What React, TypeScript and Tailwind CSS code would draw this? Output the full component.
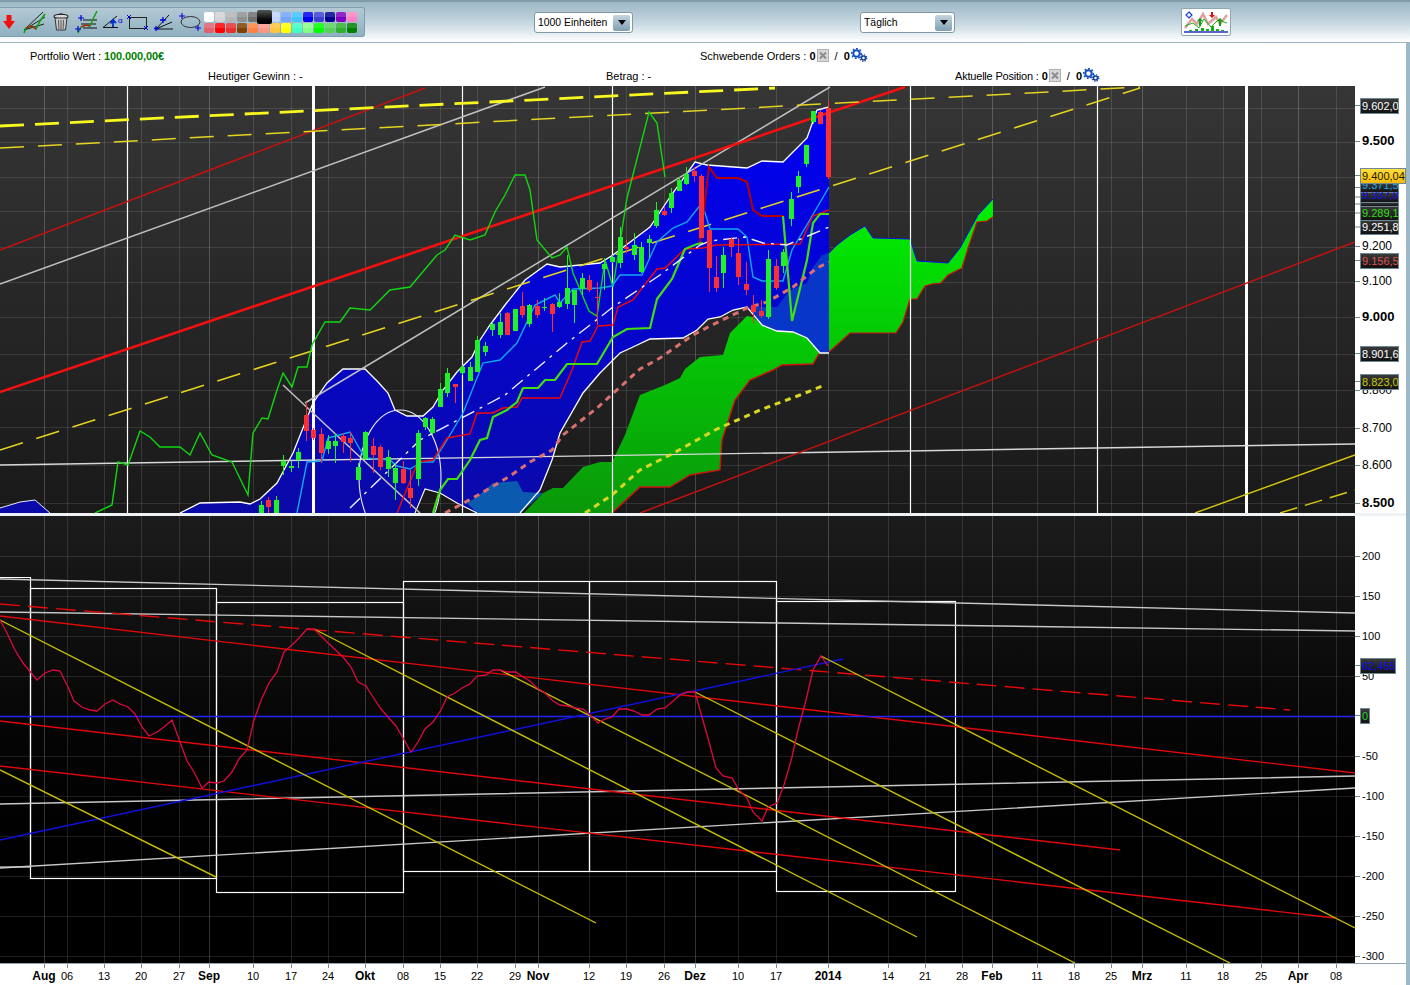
import React from 'react';

// page x of every time tick, shared by both panels and the date axis
const ticks: [number, string, boolean][] = [
    [44, 'Aug', true], [67, '06', false], [104, '13', false], [141, '20', false], [179, '27', false],
    [209, 'Sep', true], [253, '10', false], [291, '17', false], [328, '24', false], [365, 'Okt', true],
    [403, '08', false], [440, '15', false], [477, '22', false], [515, '29', false], [538, 'Nov', true],
    [589, '12', false], [626, '19', false], [664, '26', false], [695, 'Dez', true], [738, '10', false],
    [776, '17', false], [828, '2014', true], [888, '14', false], [925, '21', false], [962, '28', false],
    [992, 'Feb', true], [1037, '11', false], [1074, '18', false], [1111, '25', false], [1142, 'Mrz', true],
    [1186, '11', false], [1223, '18', false], [1261, '25', false], [1298, 'Apr', true], [1336, '08', false],
];

// x, body top, body bottom, wick top, wick bottom, colour
type Candle = [number, number, number, number, number, 'g' | 'r'];
const candles: Candle[] = [
    [261, 505, 513, 501, 513, 'g'], [268, 500, 507, 497, 513, 'r'], [276, 500, 513, 496, 513, 'g'],
    [283, 461, 466, 455, 475, 'g'], [291, 466, 468, 461, 472, 'g'], [298, 452, 460, 448, 468, 'g'],
    [306, 415, 431, 402, 441, 'r'], [313, 430, 438, 428, 440, 'r'], [321, 434, 453, 428, 463, 'r'],
    [328, 441, 449, 435, 454, 'g'], [335, 441, 446, 433, 463, 'g'], [343, 436, 442, 433, 453, 'r'],
    [350, 438, 443, 432, 462, 'r'], [358, 467, 480, 463, 480, 'g'], [365, 432, 459, 431, 460, 'g'],
    [373, 446, 455, 438, 473, 'r'], [380, 447, 467, 445, 470, 'r'], [388, 457, 469, 450, 477, 'g'],
    [395, 468, 483, 463, 500, 'g'], [403, 469, 483, 461, 484, 'r'], [410, 488, 498, 470, 508, 'r'],
    [418, 433, 479, 430, 486, 'g'], [425, 418, 427, 417, 430, 'g'], [432, 419, 433, 417, 435, 'g'],
    [440, 389, 407, 383, 407, 'g'], [447, 373, 393, 368, 397, 'g'], [455, 384, 387, 384, 403, 'r'],
    [462, 367, 373, 365, 375, 'g'], [470, 367, 381, 362, 381, 'g'], [477, 340, 372, 336, 372, 'g'],
    [485, 346, 352, 342, 356, 'g'], [492, 324, 330, 322, 336, 'g'], [500, 322, 335, 313, 338, 'g'],
    [507, 313, 335, 312, 335, 'r'], [515, 309, 331, 309, 331, 'g'], [522, 306, 315, 292, 318, 'r'],
    [529, 305, 324, 304, 327, 'g'], [537, 306, 315, 300, 318, 'r'], [544, 307, 308, 298, 311, 'g'],
    [552, 304, 314, 303, 332, 'r'], [559, 302, 307, 293, 308, 'g'], [567, 288, 304, 255, 309, 'g'],
    [574, 290, 305, 290, 323, 'g'], [582, 278, 289, 273, 295, 'g'], [589, 280, 290, 275, 292, 'r'],
    [597, 297, 298, 282, 325, 'r'], [604, 264, 269, 258, 290, 'g'], [612, 257, 262, 255, 263, 'g'],
    [620, 237, 263, 227, 268, 'g'], [626, 247, 249, 240, 253, 'r'], [634, 245, 255, 233, 260, 'g'],
    [641, 247, 272, 242, 273, 'g'], [649, 239, 243, 235, 258, 'g'], [656, 210, 226, 202, 228, 'g'],
    [664, 211, 215, 207, 216, 'r'], [671, 193, 208, 188, 213, 'g'], [679, 180, 191, 177, 191, 'g'],
    [686, 174, 184, 167, 185, 'g'], [694, 171, 176, 167, 182, 'r'], [701, 176, 238, 174, 238, 'r'],
    [709, 230, 268, 230, 292, 'r'], [716, 277, 288, 256, 292, 'r'], [723, 255, 273, 247, 288, 'g'],
    [731, 239, 247, 237, 257, 'r'], [738, 253, 277, 238, 285, 'r'], [746, 284, 290, 262, 295, 'r'],
    [753, 305, 312, 295, 323, 'r'], [761, 311, 316, 300, 318, 'r'], [768, 259, 317, 250, 319, 'g'],
    [776, 266, 288, 259, 290, 'r'], [783, 252, 266, 249, 273, 'g'], [791, 199, 219, 192, 226, 'g'],
    [798, 176, 187, 171, 193, 'g'], [806, 145, 164, 145, 167, 'g'], [813, 111, 122, 111, 124, 'g'],
    [820, 112, 124, 110, 124, 'r'], [828, 108, 177, 100, 179, 'r'],
];

const cloudTop = '250,504 260,499 277,483 293,453 313,403 327,383 343,369 365,369 378,382 388,393 395,410 407,416 423,416 433,407 443,390 457,372 472,357 480,340 490,325 505,305 525,280 547,264 560,267 600,263 613,255 650,227 670,197 695,162 707,165 747,168 762,161 783,162 807,138 817,110 829,107';
const cloudBottom = '829,353 820,353 807,338 793,332 777,331 762,325 747,307 733,310 720,317 708,319 697,330 683,338 650,339 633,347 620,353 600,373 583,393 560,433 552,460 540,490 520,513';
const hump = '477,513 457,503 440,493 425,489 415,513';

const oscillator = '0,620 7,633 15,650 23,663 37,680 45,673 53,670 60,671 68,687 74,701 82,707 90,710 97,711 105,704 113,700 120,704 128,707 135,714 142,727 149,736 157,732 164,727 172,720 180,742 187,761 194,772 202,788 209,782 217,783 224,781 232,772 239,759 247,750 254,720 262,698 269,683 277,672 284,652 292,645 299,638 307,629 314,629 328,643 343,657 351,667 358,682 366,686 373,697 381,709 388,717 396,726 403,738 411,752 418,742 425,729 433,722 441,710 447,697 455,693 462,688 470,684 477,676 486,675 493,670 500,670 507,672 516,672 523,677 530,681 537,688 545,693 553,701 560,705 568,706 575,708 583,709 590,715 598,723 605,719 612,717 619,709 627,709 634,711 642,715 649,715 657,709 665,708 672,702 680,695 687,692 695,692 702,717 709,742 716,768 723,776 732,778 739,790 747,798 753,812 762,821 768,807 777,803 784,785 792,757 798,730 806,700 813,670 821,656 828,666';

const swatches = [
    ['#ffffff', '#d4d4d4', '#b4b4b4', '#909090', '#707070', '#000000', '#c4d2ff', '#70a4ff', '#40c4ff', '#0000f0', '#4040d4', '#000090', '#8000c0', '#ff80c4'],
    ['#e06070', '#ff0000', '#e83030', '#804000', '#ff8040', '#ff9484', '#ffc440', '#ffff00', '#40ffc4', '#84ff84', '#00ff00', '#54d454', '#30b030', '#008000'],
];

const Select = ({ label, width }: { label: string; width: string }) => (
    <div className={`${width} h-[21px] mt-[1px] flex items-center justify-between bg-white border border-[#7d98a6] rounded-[3px] pl-[3px] pr-[2px] text-[10.4px] text-black`}>
        <span>{label}</span>
        <span className="w-[17px] h-[16px] rounded-[2px] bg-linear-to-b from-[#c4d6df] to-[#7f9fb0] flex items-center justify-center">
            <span className="w-0 h-0 border-x-[4px] border-x-transparent border-t-[5px] border-t-black" />
        </span>
    </div>
);

const Gears = () => (
    <svg width="17" height="14" viewBox="0 0 17 14" className="inline-block align-[-2px] ml-[1px]">
        <circle cx="5.5" cy="5.5" r="3.2" fill="none" stroke="#1450c0" strokeWidth="2" />
        <circle cx="5.5" cy="5.5" r="4.8" fill="none" stroke="#1450c0" strokeWidth="1.6" strokeDasharray="1.8 1.8" />
        <circle cx="12.5" cy="10" r="2" fill="none" stroke="#0f3f9c" strokeWidth="1.5" />
        <circle cx="12.5" cy="10" r="3.3" fill="none" stroke="#0f3f9c" strokeWidth="1.2" strokeDasharray="1.3 1.3" />
    </svg>
);

const CloseBox = () => (
    <svg width="12" height="13" viewBox="0 0 12 13" className="inline-block align-[-2px] ml-[1px]">
        <rect x="0.5" y="0.5" width="11" height="12" fill="#d8d8d8" stroke="#b0b0b0" />
        <path d="M3 3.5l6 6M9 3.5l-6 6" stroke="#8c8c8c" strokeWidth="2" />
    </svg>
);

const Orders = () => (
    <>
        <b>0</b><CloseBox /><span className="ml-[6px]">/</span><b className="ml-[6px]">0</b><Gears />
    </>
);

const ToolIcons = () => (
    <div className="flex items-center h-full">
        {/* down arrow */}
        <svg width="12" height="14" viewBox="0 0 12 14" className="ml-[3px]">
            <path d="M3.5 0h5v6H12L6 14 0 6h3.5z" fill="#f01010" />
        </svg>
        {/* trend fan */}
        <svg width="23" height="23" viewBox="0 0 23 23" className="ml-[8px]">
            <path d="M1 19L20 1M1 19L21 13M1 19L22 6" stroke="#111" strokeWidth="0.9" fill="none" />
            <path d="M1 22L3 17 9 15 13 18 17 10 22 3" stroke="#10a010" strokeWidth="1.6" fill="none" />
            <path d="M3 17L8 15 13 18" stroke="#d01010" strokeWidth="1.3" fill="none" />
        </svg>
        {/* trash */}
        <svg width="16" height="18" viewBox="0 0 16 18" className="ml-[7px]">
            <ellipse cx="8" cy="3.5" rx="7" ry="2.2" fill="#d9d9d9" stroke="#222" strokeWidth="1.1" />
            <path d="M5.5 1.5Q8 0 10.5 1.5" stroke="#222" fill="none" />
            <path d="M2 5l1.5 12h9L14 5z" fill="#c8c8c8" stroke="#333" strokeWidth="1" />
            <path d="M5.5 7l.4 9M8 7v9M10.5 7l-.4 9" stroke="#555" strokeWidth="1" />
        </svg>
        {/* channel with crosses */}
        <svg width="23" height="23" viewBox="0 0 23 23" className="ml-[6px]">
            <path d="M8 9h14M6 13h15M8 17h14" stroke="#111" strokeWidth="1" />
            <path d="M3 22L6 16 11 14 15 15 19 6 22 0" stroke="#10a010" strokeWidth="1.5" fill="none" />
            <path d="M6 16L11 14 15 15" stroke="#d01010" strokeWidth="1.2" fill="none" />
            <path d="M4 4v6M1 7h6M1 15v6M-2 18h6" stroke="#0000e0" strokeWidth="1.2" transform="translate(2 0)" />
        </svg>
        {/* angle */}
        <svg width="22" height="12" viewBox="0 0 22 12" className="ml-[4px]">
            <path d="M15 0L1 11.5h15" stroke="#111" strokeWidth="1" fill="none" />
            <path d="M11 11V5M8.5 7.5L11 4l3 3" stroke="#0030d0" strokeWidth="1.8" fill="none" />
            <text x="16" y="7" fontSize="8" fill="#0000d0" fontFamily="'Liberation Sans', sans-serif">α</text>
        </svg>
        {/* rectangle */}
        <svg width="22" height="17" viewBox="0 0 22 17" className="ml-[3px]">
            <rect x="2.5" y="3.5" width="17" height="11" fill="none" stroke="#222" strokeWidth="1" />
            <path d="M0 1l4 4M4 1L0 5M17 12l4 4M21 12l-4 4" stroke="#0000e0" strokeWidth="1" />
        </svg>
        {/* fibonacci fan */}
        <svg width="20" height="17" viewBox="0 0 20 17" className="ml-[5px]">
            <path d="M2 15L15 1M2 15L18 8M2 15h17" stroke="#111" strokeWidth="1" fill="none" />
            <path d="M9 3v6M6 6h6M2 12v5M-1 14.5h6" stroke="#0000e0" strokeWidth="1.3" />
        </svg>
        {/* ellipse */}
        <svg width="23" height="18" viewBox="0 0 23 18" className="ml-[5px]">
            <ellipse cx="11.5" cy="9" rx="9.5" ry="5.5" fill="none" stroke="#333" strokeWidth="1" />
            <path d="M3 0v6M0 3h6M19 12v6M16 15h6" stroke="#0000e0" strokeWidth="1.1" />
        </svg>
    </div>
);

const Palette = () => (
    <div className="relative flex flex-col gap-[1px] w-[154px]">
        {swatches.map((row, r) => (
            <div key={r} className="flex gap-[1px]">
                {row.map((c, i) => (
                    <span key={i} className="relative w-[10px] h-[10px] rounded-[2px] overflow-hidden" style={{ backgroundColor: c }}>
                        <span className="absolute inset-x-0 top-0 h-1/2 bg-white/15" />
                    </span>
                ))}
            </div>
        ))}
        <span className="absolute left-[53px] top-[-2px] w-[15px] h-[14px] rounded-[2px] bg-linear-to-b from-[#555] to-black" />
    </div>
);

const ChartButton = () => (
    <div className="w-[50px] h-[28px] rounded-[2px] border border-[#8fa5b1] bg-white p-[2px]">
        <svg width="44" height="22" viewBox="0 0 44 22">
            <path d="M1 17L8 8 13 13 19 3 24 13 32 6 36 13 43 4" stroke="#e0a0a0" strokeWidth="2.5" fill="none" />
            <path d="M1 15L9 12 15 17 20 8 27 16 34 9 43 12" stroke="#20b020" strokeWidth="1" fill="none" />
            <path d="M5 1l3 3-3 3-3-3z" fill="#fff" stroke="#1040d0" strokeWidth="1.2" />
            <path d="M15 15v-5h-2l3-3 3 3h-2v5zM35 15v-5h-2l3-3 3 3h-2v5z" fill="#10a010" />
            <path d="M27 1v3h-2l3 3 3-3h-2V1z" fill="#e01010" />
            <path d="M5 19h3v1H5zM11 18h3v2h-3zM17 17h3v3h-3zM22 18h3v2h-3zM27 15h3v5h-3zM32 18h3v2h-3zM37 19h3v1h-3z" fill="#10b010" />
            <path d="M0 21h44" stroke="#2030c0" strokeWidth="1.5" />
        </svg>
    </div>
);

const Badge = ({ y, h = 15, w = 38, x = 1360, text, color, yellow }: { y: number; h?: number; w?: number; x?: number; text: string; color: string; yellow?: boolean }) => (
    <g>
        <path d={`M1355 ${y + h / 2}h5`} stroke="#6f8896" />
        <rect x={x + 0.5} y={y + 0.5} width={w} height={h} fill={yellow ? 'url(#badgeYellow)' : 'url(#badgeDark)'} stroke="#6f8896" />
        <svg x={x + 1} y={y} width={w - 1} height={h}>
            <text x="1" y={h - 3} fontSize="11" fill={color}>{text}</text>
        </svg>
    </g>
);

const AxisDefs = () => (
    <defs>
        <linearGradient id="badgeDark" x1="0" y1="0" x2="0" y2="1">
            <stop offset="0" stopColor="#3a3a3a" />
            <stop offset="1" stopColor="#101010" />
        </linearGradient>
        <linearGradient id="badgeYellow" x1="0" y1="0" x2="0" y2="1">
            <stop offset="0" stopColor="#ffe040" />
            <stop offset="1" stopColor="#f8b800" />
        </linearGradient>
    </defs>
);

const priceLabels: [number, string, boolean][] = [
    [141, '9.500', true], [246, '9.200', false], [281, '9.100', false], [317, '9.000', true],
    [390, '8.800', false], [428, '8.700', false], [465, '8.600', false], [503, '8.500', true],
];

const PriceAxis = () => (
    <svg width="51" height="427" viewBox="1355 86 51 427" fontFamily="'Liberation Sans', sans-serif">
        <AxisDefs />
        {priceLabels.map(([y, t, bold]) => (
            <g key={t}>
                <path d={`M1355 ${y + 0.5}h5`} stroke="#6f8896" />
                <text x="1362" y={y + 4} fontSize={bold ? 13 : 12} fontWeight={bold ? 700 : 400} fill="#000">{t}</text>
            </g>
        ))}
        <Badge y={98} text="9.602,0" color="#ffffff" />
        <Badge y={374} text="8.823,0" color="#c8c800" />
        <Badge y={346} text="8.901,6" color="#ffffff" />
        <Badge y={253} text="9.156,5" color="#e05050" />
        <Badge y={183} text="9.371,5" color="#20a8f0" h={9} />
        <Badge y={192} text="9.337,0" color="#1010f0" h={10} />
        <Badge y={202} text="" color="#fff" h={4} />
        <Badge y={206} text="9.289,1" color="#30e010" h={14} />
        <Badge y={220} text="9.251,8" color="#ffffff" h={14} />
        <Badge y={168} w={45} text="9.400,04" color="#202000" yellow />
    </svg>
);

const OscAxis = () => (
    <svg width="51" height="447" viewBox="1355 516 51 447" fontFamily="'Liberation Sans', sans-serif">
        <AxisDefs />
        {[200, 150, 100, 50, -50, -100, -150, -200, -250, -300].map((v) => {
            const y = 716 - v * 0.8;
            return (
                <g key={v}>
                    <path d={`M1355 ${y + 0.5}h5`} stroke="#6f8896" />
                    <text x="1362" y={y + 4} fontSize="11" fill="#000">{v}</text>
                </g>
            );
        })}
        <Badge y={658} w={35} text="62,455" color="#1010f0" />
        <Badge y={708} w={9} text="0" color="#30d030" />
    </svg>
);

const Grid = ({ ys, top, bottom }: { ys: number[]; top: number; bottom: number }) => (
    <g>
        {ys.map((y) => <path key={y} d={`M0 ${y + 0.5}H1355`} stroke="#ffffff" strokeOpacity="0.11" />)}
        {ticks.map(([x, , month]) => (
            <path key={x} d={`M${x + 0.5} ${top}V${bottom}`} stroke="#ffffff" strokeOpacity={month ? 0.2 : 0.12} />
        ))}
    </g>
);

const PriceChart = () => (
    <svg width="1355" height="427" viewBox="0 86 1355 427" className="block">
        <defs>
            <linearGradient id="blueFill" gradientUnits="userSpaceOnUse" x1="0" y1="106" x2="0" y2="513">
                <stop offset="0" stopColor="#0000f4" />
                <stop offset="1" stopColor="#0a0aa8" />
            </linearGradient>
            <linearGradient id="greenFill" gradientUnits="userSpaceOnUse" x1="0" y1="200" x2="0" y2="513">
                <stop offset="0" stopColor="#00f000" />
                <stop offset="1" stopColor="#0a980a" />
            </linearGradient>
        </defs>
        <Grid ys={[108, 142, 177, 211, 247, 282, 317, 354, 390, 427, 465, 503]} top={86} bottom={513} />

        {/* older cloud on the left */}
        <polygon points="0,513 0,508 20,502 35,500 50,513" fill="url(#blueFill)" />
        <polyline points="0,508 20,502 35,500 50,513" fill="none" stroke="#e8e8ff" strokeWidth="1" />

        {/* band between the two white lines */}
        <polygon points={`180,513 200,503 240,502 ${cloudTop} ${cloudBottom} ${hump}`} fill="url(#blueFill)" />

        {/* kumo, green outside the band and teal inside */}
        <polygon points="524,513 543,493 553,488 563,488 583,467 600,462 612,462 625,435 640,395 665,385 680,378 685,369 700,357 723,355 730,333 747,316 753,317 762,325 777,331 793,332 807,338 820,352 813,364 782,365 773,370 750,380 735,400 722,440 720,470 690,475 670,487 640,487 612,513" fill="url(#greenFill)" />
        <polyline points="612,513 640,487 670,487 690,475 720,470 722,440 735,400 750,380 773,370 782,365 813,364 820,352" fill="none" stroke="#d01010" strokeWidth="1.4" />
        <polygon points="467,503 477,497 493,483 517,481 523,492 543,493 520,513 477,513" fill="#0a5ab0" />
        <polygon points="829,253 822,255 813,267 807,283 790,290 777,307 750,307 762,325 777,331 793,332 807,338 820,353 829,353" fill="#0836c8" />
        <polygon points="829,253 837,245 850,235 865,226 873,238 910,239 917,261 948,263 960,248 978,215 993,199 993,217 987,221 977,222 968,248 962,268 948,275 941,283 932,284 925,286 917,299 910,299 903,322 896,333 850,333 829,352" fill="url(#greenFill)" />
        <polyline points="829,253 837,245 850,235 865,226 873,238 910,239 917,261 948,263 960,248 978,215 993,199" fill="none" stroke="#1010e0" strokeWidth="1" />
        <polyline points="829,352 850,333 896,333 903,322 910,299 917,299 925,286 932,284 941,283 948,275 962,268 968,248 977,222 987,221 993,217" fill="none" stroke="#d01010" strokeWidth="1.2" />

        <polyline points={`180,513 200,503 240,502 ${cloudTop}`} fill="none" stroke="#ffffff" strokeWidth="1.3" />
        <polyline points={cloudBottom} fill="none" stroke="#ffffff" strokeWidth="1.3" />
        <polyline points={hump} fill="none" stroke="#ffffff" strokeWidth="1.1" />

        {/* session separators */}
        <path d="M127.5 86V513M462.5 86V513M612.5 86V513M910.5 86V513M1097.5 86V513" stroke="#ffffff" strokeWidth="1.2" />
        <path d="M313.5 86V513M1246.5 86V513" stroke="#ffffff" strokeWidth="3" />

        {/* trend lines */}
        <path d="M0 465L1355 444" stroke="#d8d8d8" strokeWidth="1.4" />
        <path d="M0 284L545 87M305 403L830 87M283 385L420 513" stroke="#c0c0c0" strokeWidth="1.5" fill="none" />
        <ellipse cx="400" cy="477" rx="41" ry="67" fill="none" stroke="#e8e8f8" strokeWidth="1.1" />
        <path d="M0 250L425 88M640 513L1355 242" stroke="#c81010" strokeWidth="1.5" />
        <path d="M0 392L905 87" stroke="#f41010" strokeWidth="2.6" />
        <path d="M0 126L775 88" stroke="#f8f820" strokeWidth="2.8" strokeDasharray="24 11" />
        <path d="M0 148L1140 87M0 450L1140 88" stroke="#e4d420" strokeWidth="1.5" strokeDasharray="24 14" />
        <path d="M1195 513L1355 455" stroke="#d8c810" strokeWidth="1.4" />
        <path d="M1280 513L1355 490" stroke="#d8c810" strokeWidth="1.4" strokeDasharray="18 8" />

        {/* indicators */}
        <polyline points="95,513 112,505 118,462 128,465 140,431 150,437 160,447 180,447 190,455 200,433 212,455 232,462 248,495 253,433 262,418 268,419 277,390 283,373 292,387 298,367 307,367 312,345 325,322 340,322 350,308 370,310 390,290 410,287 437,255 445,250 455,235 470,240 485,235 495,212 505,195 515,175 525,175 530,190 537,240 552,258 560,255 567,247 573,273 589,311 597,316 605,260 613,287 627,198 649,112 657,123 665,177" fill="none" stroke="#10d810" strokeWidth="1.4" />
        <polyline points="297,513 307,462 322,461 328,438 350,432 365,458 390,460 397,466 410,469 422,462 433,462 447,440 463,413 483,363 500,360 517,343 535,305 555,295 560,303 573,289 600,288 612,286 620,275 642,275 657,242 673,228 687,222 702,203 710,229 738,229 747,237 753,277 762,281 783,281 792,250 808,223 829,187" fill="none" stroke="#10a8f0" strokeWidth="1.4" />
        <polyline points="397,513 418,462 433,460 447,438 470,434 477,413 493,413 503,408 517,407 522,398 560,398 572,370 582,342 590,341 598,326 613,325 618,307 633,300 657,269 665,268 685,249 703,248 717,245 800,244 813,216 829,210" fill="none" stroke="#f00808" strokeWidth="1.4" />
        <polyline points="700,243 709,167 717,178 738,178 747,182 753,210 762,216 783,216" fill="none" stroke="#b80000" strokeWidth="2" />
        <polyline points="433,513 440,490 448,479 457,479 470,460 480,440 487,438 493,417 507,410 517,402 523,388 538,388 545,380 555,380 567,364 597,364 613,337 627,329 650,328 657,299 672,279 685,249 697,244 703,243" fill="none" stroke="#40e010" strokeWidth="2.2" />
        <polyline points="783,216 792,321 807,260 813,223 820,214 829,214" fill="none" stroke="#40e010" strokeWidth="2.2" />
        <polyline points="350,508 420,440 505,395 567,343 613,307 660,275 700,245 710,241 745,237 763,243 787,245 803,238 829,227" fill="none" stroke="#f0f0ff" strokeWidth="1.4" strokeDasharray="14 6 3 6" />
        <polyline points="445,513 460,505 480,494 510,476 530,462 552,450 563,435 597,408 640,369 660,358 693,335 710,326 747,308 767,302 793,287 817,268 829,262" fill="none" stroke="#d87070" strokeWidth="3" strokeDasharray="6 5" />
        <polyline points="585,513 612,495 640,470 670,455 715,430 760,410 800,395 825,385" fill="none" stroke="#d8d820" strokeWidth="3" strokeDasharray="6 5" />

        {/* candles */}
        {candles.map(([x, top, bot, hi, lo, c]) => (
            <g key={x} fill={c === 'g' ? '#20f028' : '#fa3034'}>
                <rect x={x} y={hi} width="1" height={lo - hi} />
                <rect x={x - 2} y={top} width="5" height={Math.max(bot - top, 1)} />
            </g>
        ))}
    </svg>
);

const OscChart = () => (
    <svg width="1355" height="447" viewBox="0 516 1355 447" className="block">
        <Grid ys={[556, 596, 636, 676, 756, 796, 836, 876, 916, 956]} top={516} bottom={963} />
        {/* week boxes */}
        <g fill="none" stroke="#ffffff" strokeWidth="1.2">
            <path d="M-2 577.5H30.5V867H-2" />
            <rect x="30.5" y="588.5" width="186" height="290" />
            <rect x="216.5" y="602.5" width="187" height="290" />
            <rect x="403.5" y="581.5" width="186" height="290" />
            <rect x="589.5" y="581.5" width="187" height="290" />
            <rect x="776.5" y="601.5" width="179" height="290" />
        </g>
        <path d="M0 579L1355 613M0 612L1355 631M0 804L1355 776M0 868L1355 788" stroke="#c8c8c8" strokeWidth="1.4" fill="none" />
        <path d="M0 604L1290 710" stroke="#e80808" strokeWidth="1.4" strokeDasharray="20 8" />
        <path d="M0 616L1355 773M0 721L1120 850M0 766L1335 918" stroke="#e00808" strokeWidth="1.4" fill="none" />
        <path d="M0 716.5H1355" stroke="#2424f0" strokeWidth="1.3" />
        <path d="M0 840L843 659" stroke="#1010e0" strokeWidth="1.4" />
        <path d="M0 770L216 877M0 620L596 923M314 629L917 937M500 670L1075 963M695 692L1230 963M821 656L1355 928" stroke="#c4bc00" strokeWidth="1.4" fill="none" />
        <polyline points={oscillator} fill="none" stroke="#e00840" strokeWidth="1.3" />
    </svg>
);

const DateAxis = () => (
    <svg width="1406" height="20" viewBox="0 963 1406 20" className="block" fontFamily="'Liberation Sans', sans-serif">
        <path d="M0 963.5H1406" stroke="#8fa5b1" />
        {ticks.map(([x, t, bold]) => (
            <g key={x}>
                <path d={`M${x + 0.5} 964v4`} stroke="#7f8f98" />
                <text x={x} y="980" textAnchor="middle" fontSize={bold ? 12 : 11} fontWeight={bold ? 700 : 400} fill="#000">{t}</text>
            </g>
        ))}
    </svg>
);

export default function App() {
    return (
        <div className="w-[1410px] h-[985px] overflow-hidden bg-white flex flex-col font-['Liberation_Sans',sans-serif] text-[11px] text-black">
            {/* toolbar */}
            <div className="h-[43px] shrink-0 flex items-center bg-linear-to-b from-[#9db8c6] via-[#c4d6df] to-white border-t-2 border-t-[#7f9aa8] border-b border-b-[#9db3bf]">
                <div className="w-[365px] h-[30px] flex items-center bg-linear-to-b from-[#b4c9d4] to-[#8fb0c0] border border-l-0 border-[#7f9db0] rounded-r-[3px]">
                    <div className="w-[204px] h-full"><ToolIcons /></div>
                    <Palette />
                </div>
                <div className="ml-[169px]"><Select label="1000 Einheiten" width="w-[99px]" /></div>
                <div className="ml-[227px]"><Select label="Täglich" width="w-[95px]" /></div>
                <div className="ml-[226px]"><ChartButton /></div>
            </div>

            <div className="flex-1 flex min-h-0">
                <div className="w-[1406px] flex flex-col">
                    {/* account summary */}
                    <div className="h-[43px] shrink-0 flex flex-col pt-[3px]">
                        <div className="h-[21px] flex items-center">
                            <div className="w-[700px] pl-[30px] tracking-[-0.1px]">Portfolio Wert : <b className="text-[#008000]">100.000,00€</b></div>
                            <div>Schwebende Orders : <Orders /></div>
                        </div>
                        <div className="h-[19px] flex items-center">
                            <div className="w-[606px] pl-[208px]">Heutiger Gewinn : -</div>
                            <div className="w-[349px]">Betrag : -</div>
                            <div><span className="tracking-[-0.2px]">Aktuelle Position :</span> <Orders /></div>
                        </div>
                    </div>

                    <div className="flex h-[427px] shrink-0">
                        <div className="bg-linear-to-b from-[#363636] to-[#191919]"><PriceChart /></div>
                        <PriceAxis />
                    </div>
                    <div className="h-[3px] shrink-0 bg-[#eef2f4]" />
                    <div className="flex h-[447px] shrink-0">
                        <div className="bg-linear-to-b from-[#1c1c1c] to-black"><OscChart /></div>
                        <OscAxis />
                    </div>
                    <DateAxis />
                </div>
                <div className="w-[4px] bg-[#9db8c6]" />
            </div>
        </div>
    );
}
